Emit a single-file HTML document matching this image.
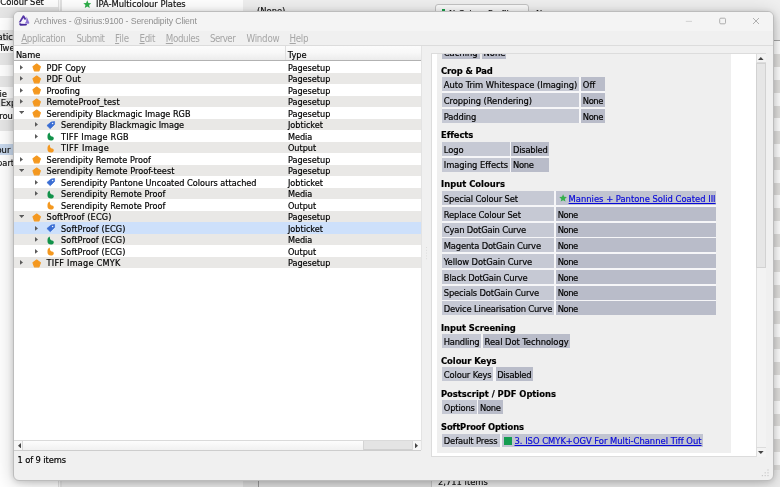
<!DOCTYPE html><html><head><meta charset="utf-8"><title>Archives - @sirius:9100 - Serendipity Client</title><style>
*{box-sizing:border-box;margin:0;padding:0}
html,body{width:780px;height:487px;overflow:hidden;background:#fff}
body{position:relative;font-family:"DejaVu Sans Condensed","Liberation Sans",sans-serif;font-size:9.05px;color:#000;-webkit-text-stroke-width:0.18px}
.a{position:absolute}
.t{position:absolute;white-space:nowrap;line-height:1}
#win{position:absolute;left:13px;top:11px;width:761px;height:470px;background:#f0f0f0;border-radius:6px;border:1px solid #bcbcbc;box-shadow:0 3px 20px rgba(0,0,0,.2),0 1px 6px rgba(0,0,0,.16);overflow:hidden}
.row{position:absolute;left:0;width:100%;height:11.5px}
.cell{position:absolute;background:#b9bcc9;height:13.9px}
.lab{background:#c6c9d4}
.lc{background:#c1c4d1}
.hd{position:absolute;font-weight:bold;white-space:nowrap;line-height:1;font-size:9.3px;color:#000}
.ct{position:absolute;white-space:nowrap;line-height:1;font-size:9.3px;color:#000}
.lnk{color:#0808d8;text-decoration:underline;text-decoration-thickness:0.8px;text-underline-offset:0.8px}
.menu{-webkit-text-stroke-width:0;position:absolute;white-space:nowrap;line-height:1;font-size:9.7px;color:#a6a6a6}
.menu u{text-decoration-thickness:0.7px;text-underline-offset:1px}
</style></head><body><div id="bg" class="a" style="left:0;top:0;width:780px;height:487px;will-change:transform"><div class="a" style="left:0;top:0;width:780px;height:487px;background:#fff"></div><div class="a" style="left:243.3px;top:0;width:537px;height:40px;background:#f0f0f0"></div><div class="a" style="left:0;top:6.5px;width:57.5px;height:11.00px;background:#e6e6e6"></div><div class="a" style="left:0;top:30.3px;width:57.5px;height:11.20px;background:#e8e8e8"></div><div class="a" style="left:0;top:53px;width:57.5px;height:11.90px;background:#e8e8e8"></div><div class="a" style="left:0;top:75.9px;width:57.5px;height:11.10px;background:#e8e8e8"></div><div class="a" style="left:0;top:97.7px;width:57.5px;height:9.30px;background:#e8e8e8"></div><div class="a" style="left:0;top:119.5px;width:57.5px;height:11.30px;background:#e8e8e8"></div><div class="a" style="left:0;top:143.6px;width:57.5px;height:11.80px;background:#c9d9ee"></div><div class="a" style="left:57.5px;top:0;width:4.5px;height:487px;background:#e2e2e2"></div><div class="a" style="left:59.2px;top:0;width:1px;height:487px;background:#f8f8f8"></div><div class="t" style="left:0.3px;top:-2.6px;font-size:9.3px;color:#111">Colour Set</div><div class="t" style="left:-2.5px;top:31.6px;font-size:9.3px;color:#111">atic</div><div class="t" style="left:-1px;top:42.6px;font-size:9.3px;color:#111">Twe</div><div class="t" style="left:-0.5px;top:88.6px;font-size:9.3px;color:#111">ie</div><div class="t" style="left:0.8px;top:98.4px;font-size:9.3px;color:#111">Exp</div><div class="t" style="left:-0.8px;top:110.5px;font-size:9.3px;color:#111">rou</div><div class="t" style="left:-3.5px;top:145.4px;font-size:9.3px;color:#111">our S</div><div class="t" style="left:-3px;top:157.6px;font-size:9.3px;color:#111">part</div><svg class="a" style="left:82.5px;top:-0.5px" width="8.5" height="8.5" viewBox="0 0 24 24"><path fill="#2eb04a" d="M12 1l3.2 7.4 8 .7-6.1 5.3 1.9 7.9L12 18.1 5 22.3l1.9-7.9L.8 9.1l8-.7z"></path></svg><div class="t" style="left:96px;top:-0.6px;font-size:9.3px;color:#111">IPA-Multicolour Plates</div><div class="t" style="left:257px;top:5.9px;font-size:9.3px;color:#111">(None)</div><div class="a" style="left:435.3px;top:4.3px;width:93.5px;height:14px;background:#fbfbfb;border:0.8px solid #c4c4c4;border-radius:3px"></div><div class="a" style="left:441.8px;top:8.6px;width:3.6px;height:5px;background:#19a24a"></div><div class="t" style="left:449px;top:8.5px;font-size:9.3px;color:#111">N-Colour Profile...</div><div class="t" style="left:536px;top:8.5px;font-size:9.3px;color:#111">None</div><div class="a" style="left:766px;top:39.8px;width:14px;height:1.1px;background:#a8a8a8"></div><div class="a" style="left:766px;top:54.4px;width:14px;height:12.8px;background:#e2e1df"></div><div class="a" style="left:766px;top:80.0px;width:14px;height:12.8px;background:#e2e1df"></div><div class="a" style="left:766px;top:105.7px;width:14px;height:12.8px;background:#e2e1df"></div><div class="a" style="left:766px;top:131.3px;width:14px;height:12.8px;background:#e2e1df"></div><div class="a" style="left:766px;top:157.0px;width:14px;height:12.8px;background:#e2e1df"></div><div class="a" style="left:766px;top:182.7px;width:14px;height:12.8px;background:#e2e1df"></div><div class="a" style="left:766px;top:208.3px;width:14px;height:12.8px;background:#e2e1df"></div><div class="a" style="left:766px;top:234.0px;width:14px;height:12.8px;background:#e2e1df"></div><div class="a" style="left:766px;top:259.6px;width:14px;height:12.8px;background:#e2e1df"></div><div class="a" style="left:766px;top:285.2px;width:14px;height:12.8px;background:#e2e1df"></div><div class="a" style="left:766px;top:310.9px;width:14px;height:12.8px;background:#e2e1df"></div><div class="a" style="left:766px;top:336.5px;width:14px;height:12.8px;background:#e2e1df"></div><div class="a" style="left:766px;top:362.2px;width:14px;height:12.8px;background:#e2e1df"></div><div class="a" style="left:766px;top:387.8px;width:14px;height:12.8px;background:#e2e1df"></div><div class="a" style="left:766px;top:413.5px;width:14px;height:12.8px;background:#e2e1df"></div><div class="a" style="left:766px;top:439.1px;width:14px;height:12.8px;background:#e2e1df"></div><div class="a" style="left:766px;top:464.8px;width:14px;height:12.8px;background:#e2e1df"></div><div class="a" style="left:0;top:470px;width:57.5px;height:17px;background:#fff"></div><div class="a" style="left:62px;top:470px;width:181px;height:17px;background:#ececec"></div><div class="a" style="left:243px;top:470px;width:14.5px;height:17px;background:#dedede"></div><div class="a" style="left:257.5px;top:470px;width:1px;height:17px;background:#9a9a9a"></div><div class="a" style="left:258.5px;top:470px;width:172px;height:17px;background:#e0e0e0"></div><div class="a" style="left:430.5px;top:470px;width:1px;height:17px;background:#c4c4c4"></div><div class="a" style="left:431.5px;top:470px;width:349px;height:17px;background:#ededed"></div><div class="t" style="left:438px;top:477.4px;font-size:9.3px;color:#111">2,711 items</div></div><div id="win"></div><div id="wc" class="a" style="left:0;top:0;width:780px;height:487px;will-change:transform"><div class="a" style="left:14px;top:12px;width:759px;height:19px;background:#f4f4f4;border-radius:5px 5px 0 0"></div><svg class="a" style="left:18.2px;top:15.4px" width="11.5" height="11.5" viewBox="18.5 15.2 11.5 11.5"><path fill="#f6f2fd" d="M23.9 17.8L20.9 23.4L26.2 23.8L26.6 19Z"></path><path fill="#5434a6" d="M19.2 22.7L23.3 15.8Q24 15.2 24.8 15.9L26.8 19.2L25.3 20.1L23.9 18.2L21.2 22.4Z"></path><path fill="#8a70d2" d="M27.1 16.6L29.8 23Q29.9 23.9 29 23.9L25.2 23.6L26.6 21.6Z"></path><path fill="#44269a" d="M20.2 23.1L21.8 24L27 24.1L27.7 24.9L26.6 25.8L21 25.9Q19.6 25.5 19.8 24.2Z"></path></svg><div class="t" style="left: 34px; top: 17.1px; font-family: &quot;Liberation Sans&quot;, sans-serif; font-size: 8.7px; color: rgb(143, 143, 143); -webkit-text-stroke-width: 0px; letter-spacing: -0.111px;">Archives - @sirius:9100 - Serendipity Client</div><svg class="a" style="left:680px;top:12px" width="90" height="20" viewBox="0 0 90 20"><g stroke="#929292" stroke-width="0.7" fill="none"><path d="M5.8 9.4h6.2" stroke="#c4c4c4"></path><rect x="39.7" y="6.2" width="5.8" height="5.6" rx="1.1"></rect><path d="M73 6l6 6M79 6l-6 6"></path></g></svg><div class="menu" style="left: 21.3px; top: 34.1px; letter-spacing: -0.42px;"><u>A</u>pplication</div><div class="menu" style="left: 76.5px; top: 34.1px; letter-spacing: -0.487px;">Submit</div><div class="menu" style="left: 115px; top: 34.1px; letter-spacing: -0.133px;"><u>F</u>ile</div><div class="menu" style="left: 139.5px; top: 34.1px; letter-spacing: -0.348px;"><u>E</u>dit</div><div class="menu" style="left: 165.8px; top: 34.1px; letter-spacing: -0.393px;"><u>M</u>odules</div><div class="menu" style="left: 210px; top: 34.1px; letter-spacing: -0.566px;">Server</div><div class="menu" style="left: 246.5px; top: 34.1px; letter-spacing: -0.243px;">Window</div><div class="menu" style="left: 289.6px; top: 34.1px; letter-spacing: -0.348px;"><u>H</u>elp</div><div class="a" style="left:14px;top:45.2px;width:759px;height:0.9px;background:#dcdcdc"></div><div class="a" style="left:14.0px;top:46.1px;width:407.4px;height:394.2px;background:#fff;overflow:hidden"><div class="a" style="left:0;top:0;width:100%;height:14.2px;background:linear-gradient(#fcfcfc,#f8f8f8 45%,#ececec)"></div><div class="a" style="left:0;top:14.1px;width:100%;height:1px;background:#b2b2b2"></div><div class="a" style="left:271.2px;top:0;width:0.9px;height:14.2px;background:#dedede"></div><div class="t" style="left:1.9000000000000004px;top:4.1px;font-size:9.200000000000001px;color:#000">Name</div><div class="t" style="left:273.8px;top:4.1px;font-size:9.200000000000001px;color:#000">Type</div><div class="row" style="top:15.20px;background:#fff"></div><svg class="a" style="left:6.05px;top:18.70px" width="3" height="4.8" viewBox="0 0 30 48"><path fill="#5a5a5a" d="M0 0L30 24L0 48Z"></path></svg><svg class="a" style="left:17.90px;top:15.20px" width="10" height="11.5" viewBox="0 0 10 11.5"><path fill="#f4981f" stroke="#f4981f" stroke-width="1.1" stroke-linejoin="round" d="M4.68 3.05L8.35 5.8L6.95 9.85L2.45 9.85L1 5.8Z"></path></svg><div class="t" style="left: 32.6px; top: 17.7px; letter-spacing: 0.026px;">PDF Copy</div><div class="t" style="left:273.90px;top:17.70px">Pagesetup</div><div class="row" style="top:26.70px;background:#e9e8e6"></div><svg class="a" style="left:6.05px;top:30.20px" width="3" height="4.8" viewBox="0 0 30 48"><path fill="#5a5a5a" d="M0 0L30 24L0 48Z"></path></svg><svg class="a" style="left:17.90px;top:26.70px" width="10" height="11.5" viewBox="0 0 10 11.5"><path fill="#f4981f" stroke="#f4981f" stroke-width="1.1" stroke-linejoin="round" d="M4.68 3.05L8.35 5.8L6.95 9.85L2.45 9.85L1 5.8Z"></path></svg><div class="t" style="left: 32.6px; top: 29.2px; letter-spacing: 0.142px;">PDF Out</div><div class="t" style="left:273.90px;top:29.20px">Pagesetup</div><div class="row" style="top:38.20px;background:#fff"></div><svg class="a" style="left:6.05px;top:41.70px" width="3" height="4.8" viewBox="0 0 30 48"><path fill="#5a5a5a" d="M0 0L30 24L0 48Z"></path></svg><svg class="a" style="left:17.90px;top:38.20px" width="10" height="11.5" viewBox="0 0 10 11.5"><path fill="#f4981f" stroke="#f4981f" stroke-width="1.1" stroke-linejoin="round" d="M4.68 3.05L8.35 5.8L6.95 9.85L2.45 9.85L1 5.8Z"></path></svg><div class="t" style="left: 32.6px; top: 40.7px; letter-spacing: 0.011px;">Proofing</div><div class="t" style="left:273.90px;top:40.70px">Pagesetup</div><div class="row" style="top:49.70px;background:#e9e8e6"></div><svg class="a" style="left:6.05px;top:53.20px" width="3" height="4.8" viewBox="0 0 30 48"><path fill="#5a5a5a" d="M0 0L30 24L0 48Z"></path></svg><svg class="a" style="left:17.90px;top:49.70px" width="10" height="11.5" viewBox="0 0 10 11.5"><path fill="#f4981f" stroke="#f4981f" stroke-width="1.1" stroke-linejoin="round" d="M4.68 3.05L8.35 5.8L6.95 9.85L2.45 9.85L1 5.8Z"></path></svg><div class="t" style="left: 32.6px; top: 52.2px; letter-spacing: 0.082px;">RemoteProof_test</div><div class="t" style="left:273.90px;top:52.20px">Pagesetup</div><div class="row" style="top:61.20px;background:#fff"></div><svg class="a" style="left:5.00px;top:65.05px" width="5.2" height="2.9" viewBox="0 0 52 29"><path fill="#5a5a5a" d="M0 0L52 0L26 29Z"></path></svg><svg class="a" style="left:17.90px;top:61.20px" width="10" height="11.5" viewBox="0 0 10 11.5"><path fill="#f4981f" stroke="#f4981f" stroke-width="1.1" stroke-linejoin="round" d="M4.68 3.05L8.35 5.8L6.95 9.85L2.45 9.85L1 5.8Z"></path></svg><div class="t" style="left: 32.6px; top: 63.7px; letter-spacing: -0.003px;">Serendipity Blackmagic Image RGB</div><div class="t" style="left:273.90px;top:63.70px">Pagesetup</div><div class="row" style="top:72.70px;background:#e9e8e6"></div><svg class="a" style="left:20.75px;top:76.20px" width="3" height="4.8" viewBox="0 0 30 48"><path fill="#5a5a5a" d="M0 0L30 24L0 48Z"></path></svg><svg class="a" style="left:32.30px;top:72.70px" width="10" height="11.5" viewBox="0 0 10 11.5"><path fill="#3a6dd3" stroke="#3a6dd3" stroke-width="0.7" stroke-linejoin="round" d="M0.95 6.5L5.1 3.1L8.55 2.55L8.55 5.4L4.25 9.7Z"></path><circle cx="6.6" cy="4.45" r="0.8" fill="#eef3ff"></circle></svg><div class="t" style="left: 47px; top: 75.2px; letter-spacing: -0.028px;">Serendipity Blackmagic Image</div><div class="t" style="left:273.90px;top:75.20px">Jobticket</div><div class="row" style="top:84.20px;background:#fff"></div><svg class="a" style="left:20.75px;top:87.70px" width="3" height="4.8" viewBox="0 0 30 48"><path fill="#5a5a5a" d="M0 0L30 24L0 48Z"></path></svg><svg class="a" style="left:32.30px;top:84.20px" width="10" height="11.5" viewBox="0 0 10 11.5"><path transform="translate(1.2,2.6)" fill="#12924a" d="M2.3 0C1 0.9 0.3 2.2 0.3 3.6L0.3 5C0.3 6.9 1.8 8 3.6 8C5.4 8 6.6 7 6.6 5.8C6.6 4.7 5.9 4 4.9 3.9C3.4 3.7 2.7 2.6 2.7 0.9Z"></path></svg><div class="t" style="left: 47px; top: 86.7px; letter-spacing: 0.196px;">TIFF Image RGB</div><div class="t" style="left:273.90px;top:86.70px">Media</div><div class="row" style="top:95.70px;background:#e9e8e6"></div><svg class="a" style="left:32.30px;top:95.70px" width="10" height="11.5" viewBox="0 0 10 11.5"><path transform="translate(1.2,2.6)" fill="#f4981f" d="M2.3 0C1 0.9 0.3 2.2 0.3 3.6L0.3 5C0.3 6.9 1.8 8 3.6 8C5.4 8 6.6 7 6.6 5.8C6.6 4.7 5.9 4 4.9 3.9C3.4 3.7 2.7 2.6 2.7 0.9Z"></path></svg><div class="t" style="left: 47px; top: 98.2px; letter-spacing: 0.319px;">TIFF Image</div><div class="t" style="left:273.90px;top:98.20px">Output</div><div class="row" style="top:107.20px;background:#fff"></div><svg class="a" style="left:6.05px;top:110.70px" width="3" height="4.8" viewBox="0 0 30 48"><path fill="#5a5a5a" d="M0 0L30 24L0 48Z"></path></svg><svg class="a" style="left:17.90px;top:107.20px" width="10" height="11.5" viewBox="0 0 10 11.5"><path fill="#f4981f" stroke="#f4981f" stroke-width="1.1" stroke-linejoin="round" d="M4.68 3.05L8.35 5.8L6.95 9.85L2.45 9.85L1 5.8Z"></path></svg><div class="t" style="left: 32.6px; top: 109.7px; letter-spacing: 0.025px;">Serendipity Remote Proof</div><div class="t" style="left:273.90px;top:109.70px">Pagesetup</div><div class="row" style="top:118.70px;background:#e9e8e6"></div><svg class="a" style="left:5.00px;top:122.55px" width="5.2" height="2.9" viewBox="0 0 52 29"><path fill="#5a5a5a" d="M0 0L52 0L26 29Z"></path></svg><svg class="a" style="left:17.90px;top:118.70px" width="10" height="11.5" viewBox="0 0 10 11.5"><path fill="#f4981f" stroke="#f4981f" stroke-width="1.1" stroke-linejoin="round" d="M4.68 3.05L8.35 5.8L6.95 9.85L2.45 9.85L1 5.8Z"></path></svg><div class="t" style="left: 32.6px; top: 121.2px; letter-spacing: 0.037px;">Serendipity Remote Proof-teest</div><div class="t" style="left:273.90px;top:121.20px">Pagesetup</div><div class="row" style="top:130.20px;background:#fff"></div><svg class="a" style="left:20.75px;top:133.70px" width="3" height="4.8" viewBox="0 0 30 48"><path fill="#5a5a5a" d="M0 0L30 24L0 48Z"></path></svg><svg class="a" style="left:32.30px;top:130.20px" width="10" height="11.5" viewBox="0 0 10 11.5"><path fill="#3a6dd3" stroke="#3a6dd3" stroke-width="0.7" stroke-linejoin="round" d="M0.95 6.5L5.1 3.1L8.55 2.55L8.55 5.4L4.25 9.7Z"></path><circle cx="6.6" cy="4.45" r="0.8" fill="#eef3ff"></circle></svg><div class="t" style="left: 47px; top: 132.7px; letter-spacing: 0.002px;">Serendipity Pantone Uncoated Colours attached</div><div class="t" style="left:273.90px;top:132.70px">Jobticket</div><div class="row" style="top:141.70px;background:#e9e8e6"></div><svg class="a" style="left:20.75px;top:145.20px" width="3" height="4.8" viewBox="0 0 30 48"><path fill="#5a5a5a" d="M0 0L30 24L0 48Z"></path></svg><svg class="a" style="left:32.30px;top:141.70px" width="10" height="11.5" viewBox="0 0 10 11.5"><path transform="translate(1.2,2.6)" fill="#12924a" d="M2.3 0C1 0.9 0.3 2.2 0.3 3.6L0.3 5C0.3 6.9 1.8 8 3.6 8C5.4 8 6.6 7 6.6 5.8C6.6 4.7 5.9 4 4.9 3.9C3.4 3.7 2.7 2.6 2.7 0.9Z"></path></svg><div class="t" style="left: 47px; top: 144.2px; letter-spacing: 0.033px;">Serendipity Remote Proof</div><div class="t" style="left:273.90px;top:144.20px">Media</div><div class="row" style="top:153.20px;background:#fff"></div><svg class="a" style="left:32.30px;top:153.20px" width="10" height="11.5" viewBox="0 0 10 11.5"><path transform="translate(1.2,2.6)" fill="#f4981f" d="M2.3 0C1 0.9 0.3 2.2 0.3 3.6L0.3 5C0.3 6.9 1.8 8 3.6 8C5.4 8 6.6 7 6.6 5.8C6.6 4.7 5.9 4 4.9 3.9C3.4 3.7 2.7 2.6 2.7 0.9Z"></path></svg><div class="t" style="left: 47px; top: 155.7px; letter-spacing: 0.033px;">Serendipity Remote Proof</div><div class="t" style="left:273.90px;top:155.70px">Output</div><div class="row" style="top:164.70px;background:#e9e8e6"></div><svg class="a" style="left:5.00px;top:168.55px" width="5.2" height="2.9" viewBox="0 0 52 29"><path fill="#5a5a5a" d="M0 0L52 0L26 29Z"></path></svg><svg class="a" style="left:17.90px;top:164.70px" width="10" height="11.5" viewBox="0 0 10 11.5"><path fill="#f4981f" stroke="#f4981f" stroke-width="1.1" stroke-linejoin="round" d="M4.68 3.05L8.35 5.8L6.95 9.85L2.45 9.85L1 5.8Z"></path></svg><div class="t" style="left: 32.6px; top: 167.2px; letter-spacing: 0.138px;">SoftProof (ECG)</div><div class="t" style="left:273.90px;top:167.20px">Pagesetup</div><div class="row" style="top:176.20px;background:#cde0fb"></div><svg class="a" style="left:20.75px;top:179.70px" width="3" height="4.8" viewBox="0 0 30 48"><path fill="#5a5a5a" d="M0 0L30 24L0 48Z"></path></svg><svg class="a" style="left:32.30px;top:176.20px" width="10" height="11.5" viewBox="0 0 10 11.5"><path fill="#3a6dd3" stroke="#3a6dd3" stroke-width="0.7" stroke-linejoin="round" d="M0.95 6.5L5.1 3.1L8.55 2.55L8.55 5.4L4.25 9.7Z"></path><circle cx="6.6" cy="4.45" r="0.8" fill="#eef3ff"></circle></svg><div class="t" style="left: 47px; top: 178.7px; letter-spacing: 0.118px;">SoftProof (ECG)</div><div class="t" style="left:273.90px;top:178.70px">Jobticket</div><div class="row" style="top:187.70px;background:#e9e8e6"></div><svg class="a" style="left:20.75px;top:191.20px" width="3" height="4.8" viewBox="0 0 30 48"><path fill="#5a5a5a" d="M0 0L30 24L0 48Z"></path></svg><svg class="a" style="left:32.30px;top:187.70px" width="10" height="11.5" viewBox="0 0 10 11.5"><path transform="translate(1.2,2.6)" fill="#12924a" d="M2.3 0C1 0.9 0.3 2.2 0.3 3.6L0.3 5C0.3 6.9 1.8 8 3.6 8C5.4 8 6.6 7 6.6 5.8C6.6 4.7 5.9 4 4.9 3.9C3.4 3.7 2.7 2.6 2.7 0.9Z"></path></svg><div class="t" style="left: 47px; top: 190.2px; letter-spacing: 0.118px;">SoftProof (ECG)</div><div class="t" style="left:273.90px;top:190.20px">Media</div><div class="row" style="top:199.20px;background:#fff"></div><svg class="a" style="left:20.75px;top:202.70px" width="3" height="4.8" viewBox="0 0 30 48"><path fill="#5a5a5a" d="M0 0L30 24L0 48Z"></path></svg><svg class="a" style="left:32.30px;top:199.20px" width="10" height="11.5" viewBox="0 0 10 11.5"><path transform="translate(1.2,2.6)" fill="#f4981f" d="M2.3 0C1 0.9 0.3 2.2 0.3 3.6L0.3 5C0.3 6.9 1.8 8 3.6 8C5.4 8 6.6 7 6.6 5.8C6.6 4.7 5.9 4 4.9 3.9C3.4 3.7 2.7 2.6 2.7 0.9Z"></path></svg><div class="t" style="left: 47px; top: 201.7px; letter-spacing: 0.118px;">SoftProof (ECG)</div><div class="t" style="left:273.90px;top:201.70px">Output</div><div class="row" style="top:210.70px;background:#e9e8e6"></div><svg class="a" style="left:6.05px;top:214.20px" width="3" height="4.8" viewBox="0 0 30 48"><path fill="#5a5a5a" d="M0 0L30 24L0 48Z"></path></svg><svg class="a" style="left:17.90px;top:210.70px" width="10" height="11.5" viewBox="0 0 10 11.5"><path fill="#f4981f" stroke="#f4981f" stroke-width="1.1" stroke-linejoin="round" d="M4.68 3.05L8.35 5.8L6.95 9.85L2.45 9.85L1 5.8Z"></path></svg><div class="t" style="left: 32.6px; top: 213.2px; letter-spacing: 0.232px;">TIFF Image CMYK</div><div class="t" style="left:273.90px;top:213.20px">Pagesetup</div></div><div class="a" style="left:14.0px;top:440.3px;width:407.4px;height:10.2px;background:#e4e4e4;border-top:0.8px solid #dadada;border-bottom:0.8px solid #d0d0d0"></div><div class="a" style="left:14.0px;top:440.6px;width:8.8px;height:9.6px;background:#f6f6f6;border-right:0.7px solid #d8d8d8"></div><div class="a" style="left:23.4px;top:440.6px;width:340.3px;height:9.6px;background:linear-gradient(#fdfdfd,#f1f1f1);border-right:0.7px solid #d4d4d4"></div><div class="a" style="left:411.5px;top:440.6px;width:9.9px;height:9.6px;background:#f6f6f6;border-left:0.7px solid #d8d8d8"></div><svg class="a" style="left:17.6px;top:442.8px" width="3" height="5.4" viewBox="0 0 30 54"><path fill="#444" d="M30 0L0 27L30 54Z"></path></svg><svg class="a" style="left:414.8px;top:442.8px" width="3" height="5.4" viewBox="0 0 30 54"><path fill="#444" d="M0 0L30 27L0 54Z"></path></svg><div class="a" style="left:421.4px;top:46.1px;width:0.8px;height:404.4px;background:#e3e3e3"></div><div class="a" style="left:14.0px;top:449.8px;width:407.4px;height:0.9px;background:#cdcdcd"></div><svg class="a" style="left:425.2px;top:246px" width="3" height="16" viewBox="0 0 3 16"><g fill="#dcdcdc"><rect x="1" y="1" width="1" height="1"></rect><rect x="1" y="3.8" width="1" height="1"></rect><rect x="1" y="6.6" width="1" height="1"></rect><rect x="1" y="9.4" width="1" height="1"></rect><rect x="1" y="12.2" width="1" height="1"></rect></g></svg><div class="t" style="left: 17.5px; top: 455.2px; font-size: 9.25px; letter-spacing: -0.098px;">1 of 9 items</div><div class="a" style="left:431.3px;top:53.2px;width:334.7px;height:404.1px;background:#fff;border:0.8px solid #dcdcdc;overflow:hidden"></div><div class="a" style="left:437.2px;top:54.0px;width:293.7px;height:398.9px;background:#efefef"></div><div class="a" style="left:756.2px;top:54.0px;width:9.6px;height:402.5px;background:#f3f3f3;border-left:0.7px solid #dedede"></div><div class="a" style="left:756.2px;top:63.2px;width:9.6px;height:205.2px;background:#e6e6e6;border:0.7px solid #d2d2d2"></div><svg class="a" style="left:758.2px;top:57px" width="5.6" height="3" viewBox="0 0 56 30"><path fill="#444" d="M0 30L28 0L56 30Z"></path></svg><svg class="a" style="left:758.4px;top:451.2px" width="5.6" height="3" viewBox="0 0 56 30"><path fill="#444" d="M0 0L28 30L56 0Z"></path></svg><div class="a" style="left:756.2px;top:62.3px;width:9.6px;height:0.7px;background:#dcdcdc"></div><div class="a" style="left:756.2px;top:447.2px;width:9.6px;height:0.7px;background:#dcdcdc"></div><div class="a" style="left:437.2px;top:54.0px;width:300px;height:10px;overflow:hidden"><div class="cell" style="left:4.699999999999989px;top:-9.3px;width:37.80000000000001px"></div><div class="cell" style="left:44.5px;top:-9.3px;width:24.30000000000001px"></div><div class="ct" style="left:6.600000000000023px;top:-6.3px">Caching</div><div class="ct" style="left:46.400000000000034px;top:-6.3px">None</div></div><div class="hd" style="left: 441px; top: 65.8px; letter-spacing: -0.102px;">Crop &amp; Pad</div><div class="a" style="left:441.9px;top:77.4px;width:163.00px;height:45.44px;background:#f6f6f8"></div><div class="cell lab" style="left:441.90px;top:77.40px;width:137.00px"></div><div class="ct" style="left: 443.8px; top: 80.1px; letter-spacing: -0.034px;">Auto Trim Whitespace (Imaging)</div><div class="cell" style="left:580.90px;top:77.40px;width:24.00px"></div><div class="ct" style="left:582.80px;top:80.10px">Off</div><div class="cell lab" style="left:441.90px;top:93.17px;width:137.00px"></div><div class="ct" style="left: 443.8px; top: 95.87px; letter-spacing: -0.07px;">Cropping (Rendering)</div><div class="cell" style="left:580.90px;top:93.17px;width:24.00px"></div><div class="ct" style="left: 582.8px; top: 95.87px; letter-spacing: -0.407px;">None</div><div class="cell lab" style="left:441.90px;top:108.94px;width:137.00px"></div><div class="ct" style="left: 443.8px; top: 111.64px; letter-spacing: -0.13px;">Padding</div><div class="cell" style="left:580.90px;top:108.94px;width:24.00px"></div><div class="ct" style="left: 582.8px; top: 111.64px; letter-spacing: -0.407px;">None</div><div class="hd" style="left: 441px; top: 130px; letter-spacing: -0.058px;">Effects</div><div class="a" style="left:441.9px;top:142.0px;width:107.00px;height:29.67px;background:#f6f6f8"></div><div class="cell lab" style="left:441.90px;top:142.00px;width:67.80px"></div><div class="ct" style="left: 443.8px; top: 144.7px; letter-spacing: -0.087px;">Logo</div><div class="cell" style="left:511.10px;top:142.00px;width:37.80px"></div><div class="ct" style="left: 513px; top: 144.7px; letter-spacing: -0.23px;">Disabled</div><div class="cell lab" style="left:441.90px;top:157.77px;width:67.80px"></div><div class="ct" style="left: 443.8px; top: 160.47px; letter-spacing: -0.059px;">Imaging Effects</div><div class="cell" style="left:511.10px;top:157.77px;width:37.80px"></div><div class="ct" style="left: 513px; top: 160.47px; letter-spacing: -0.282px;">None</div><div class="hd" style="left: 441px; top: 179.3px; letter-spacing: 0.04px;">Input Colours</div><div class="a" style="left:441.9px;top:191.1px;width:274.60px;height:124.29px;background:#f6f6f8"></div><div class="cell lab" style="left:441.90px;top:191.10px;width:111.90px"></div><div class="ct" style="left: 443.8px; top: 193.8px; letter-spacing: -0.124px;">Special Colour Set</div><div class="cell lc" style="left:555.80px;top:191.10px;width:160.70px"></div><div class="ct lnk" style="left: 568.6px; top: 193.8px; letter-spacing: 0.013px;">Mannies + Pantone Solid Coated III</div><svg class="a" style="left:558.6px;top:193.70px" width="8.2" height="8.2" viewBox="0 0 24 24"><path fill="#35b04c" d="M12 1l3.2 7.4 8 .7-6.1 5.3 1.9 7.9L12 18.1 5 22.3l1.9-7.9L.8 9.1l8-.7z"></path></svg><div class="cell lab" style="left:441.90px;top:206.87px;width:111.90px"></div><div class="ct" style="left: 443.8px; top: 209.57px; letter-spacing: -0.124px;">Replace Colour Set</div><div class="cell" style="left:555.80px;top:206.87px;width:160.70px"></div><div class="ct" style="left: 557.7px; top: 209.57px; letter-spacing: -0.457px;">None</div><div class="cell lab" style="left:441.90px;top:222.64px;width:111.90px"></div><div class="ct" style="left: 443.8px; top: 225.34px; letter-spacing: -0.166px;">Cyan DotGain Curve</div><div class="cell" style="left:555.80px;top:222.64px;width:160.70px"></div><div class="ct" style="left: 557.7px; top: 225.34px; letter-spacing: -0.457px;">None</div><div class="cell lab" style="left:441.90px;top:238.41px;width:111.90px"></div><div class="ct" style="left: 443.8px; top: 241.11px; letter-spacing: -0.166px;">Magenta DotGain Curve</div><div class="cell" style="left:555.80px;top:238.41px;width:160.70px"></div><div class="ct" style="left: 557.7px; top: 241.11px; letter-spacing: -0.457px;">None</div><div class="cell lab" style="left:441.90px;top:254.18px;width:111.90px"></div><div class="ct" style="left: 443.8px; top: 256.88px; letter-spacing: -0.069px;">Yellow DotGain Curve</div><div class="cell" style="left:555.80px;top:254.18px;width:160.70px"></div><div class="ct" style="left: 557.7px; top: 256.88px; letter-spacing: -0.457px;">None</div><div class="cell lab" style="left:441.90px;top:269.95px;width:111.90px"></div><div class="ct" style="left: 443.8px; top: 272.65px; letter-spacing: -0.157px;">Black DotGain Curve</div><div class="cell" style="left:555.80px;top:269.95px;width:160.70px"></div><div class="ct" style="left: 557.7px; top: 272.65px; letter-spacing: -0.457px;">None</div><div class="cell lab" style="left:441.90px;top:285.72px;width:111.90px"></div><div class="ct" style="left: 443.8px; top: 288.42px; letter-spacing: -0.153px;">Specials DotGain Curve</div><div class="cell" style="left:555.80px;top:285.72px;width:160.70px"></div><div class="ct" style="left: 557.7px; top: 288.42px; letter-spacing: -0.457px;">None</div><div class="cell lab" style="left:441.90px;top:301.49px;width:111.90px"></div><div class="ct" style="left: 443.8px; top: 304.19px; letter-spacing: -0.155px;">Device Linearisation Curve</div><div class="cell" style="left:555.80px;top:301.49px;width:160.70px"></div><div class="ct" style="left: 557.7px; top: 304.19px; letter-spacing: -0.457px;">None</div><div class="hd" style="left: 441px; top: 322.9px; letter-spacing: -0.023px;">Input Screening</div><div class="a" style="left:441.9px;top:334.3px;width:128.10px;height:13.90px;background:#f6f6f8"></div><div class="cell lab" style="left:441.90px;top:334.30px;width:39.00px"></div><div class="ct" style="left: 443.8px; top: 337px; letter-spacing: -0.225px;">Handling</div><div class="cell" style="left:483.00px;top:334.30px;width:87.00px"></div><div class="ct" style="left: 484.6px; top: 337px; letter-spacing: -0.044px;">Real Dot Technology</div><div class="hd" style="left: 441px; top: 355.8px; letter-spacing: -0.038px;">Colour Keys</div><div class="a" style="left:441.9px;top:367.4px;width:91.20px;height:13.90px;background:#f6f6f8"></div><div class="cell lab" style="left:441.90px;top:367.40px;width:51.60px"></div><div class="ct" style="left: 443.8px; top: 370.1px; letter-spacing: -0.135px;">Colour Keys</div><div class="cell" style="left:495.50px;top:367.40px;width:37.60px"></div><div class="ct" style="left: 497.2px; top: 370.1px; letter-spacing: -0.293px;">Disabled</div><div class="hd" style="left: 441px; top: 388.9px; letter-spacing: -0.004px;">Postscript / PDF Options</div><div class="a" style="left:441.9px;top:400.2px;width:60.80px;height:13.90px;background:#f6f6f8"></div><div class="cell lab" style="left:441.90px;top:400.20px;width:34.70px"></div><div class="ct" style="left: 443.8px; top: 402.9px; letter-spacing: -0.183px;">Options</div><div class="cell" style="left:478.40px;top:400.20px;width:24.30px"></div><div class="ct" style="left: 479.9px; top: 402.9px; letter-spacing: -0.232px;">None</div><div class="hd" style="left: 441px; top: 422px; letter-spacing: -0.08px;">SoftProof Options</div><div class="a" style="left:441.9px;top:433.5px;width:261.30px;height:13.90px;background:#f6f6f8"></div><div class="cell lab" style="left:441.90px;top:433.50px;width:57.70px"></div><div class="ct" style="left: 443.8px; top: 436.2px; letter-spacing: -0.123px;">Default Press</div><div class="cell lc" style="left:501.50px;top:433.50px;width:201.70px"></div><div class="ct lnk" style="left: 514.5px; top: 436.2px; letter-spacing: 0.007px;">3. ISO CMYK+OGV For Multi-Channel Tiff Out</div><div class="a" style="left:504px;top:436.80px;width:8.4px;height:8.1px;background:#149c50"></div><svg class="a" style="left:761px;top:469px" width="9" height="9" viewBox="0 0 9 9"><g fill="#c9c9c9"><rect x="6.4" y="0.4" width="1.2" height="1.2"></rect><rect x="6.4" y="3.2" width="1.2" height="1.2"></rect><rect x="3.6" y="3.2" width="1.2" height="1.2"></rect><rect x="6.4" y="6" width="1.2" height="1.2"></rect><rect x="3.6" y="6" width="1.2" height="1.2"></rect><rect x="0.8" y="6" width="1.2" height="1.2"></rect></g></svg></div></body></html>
